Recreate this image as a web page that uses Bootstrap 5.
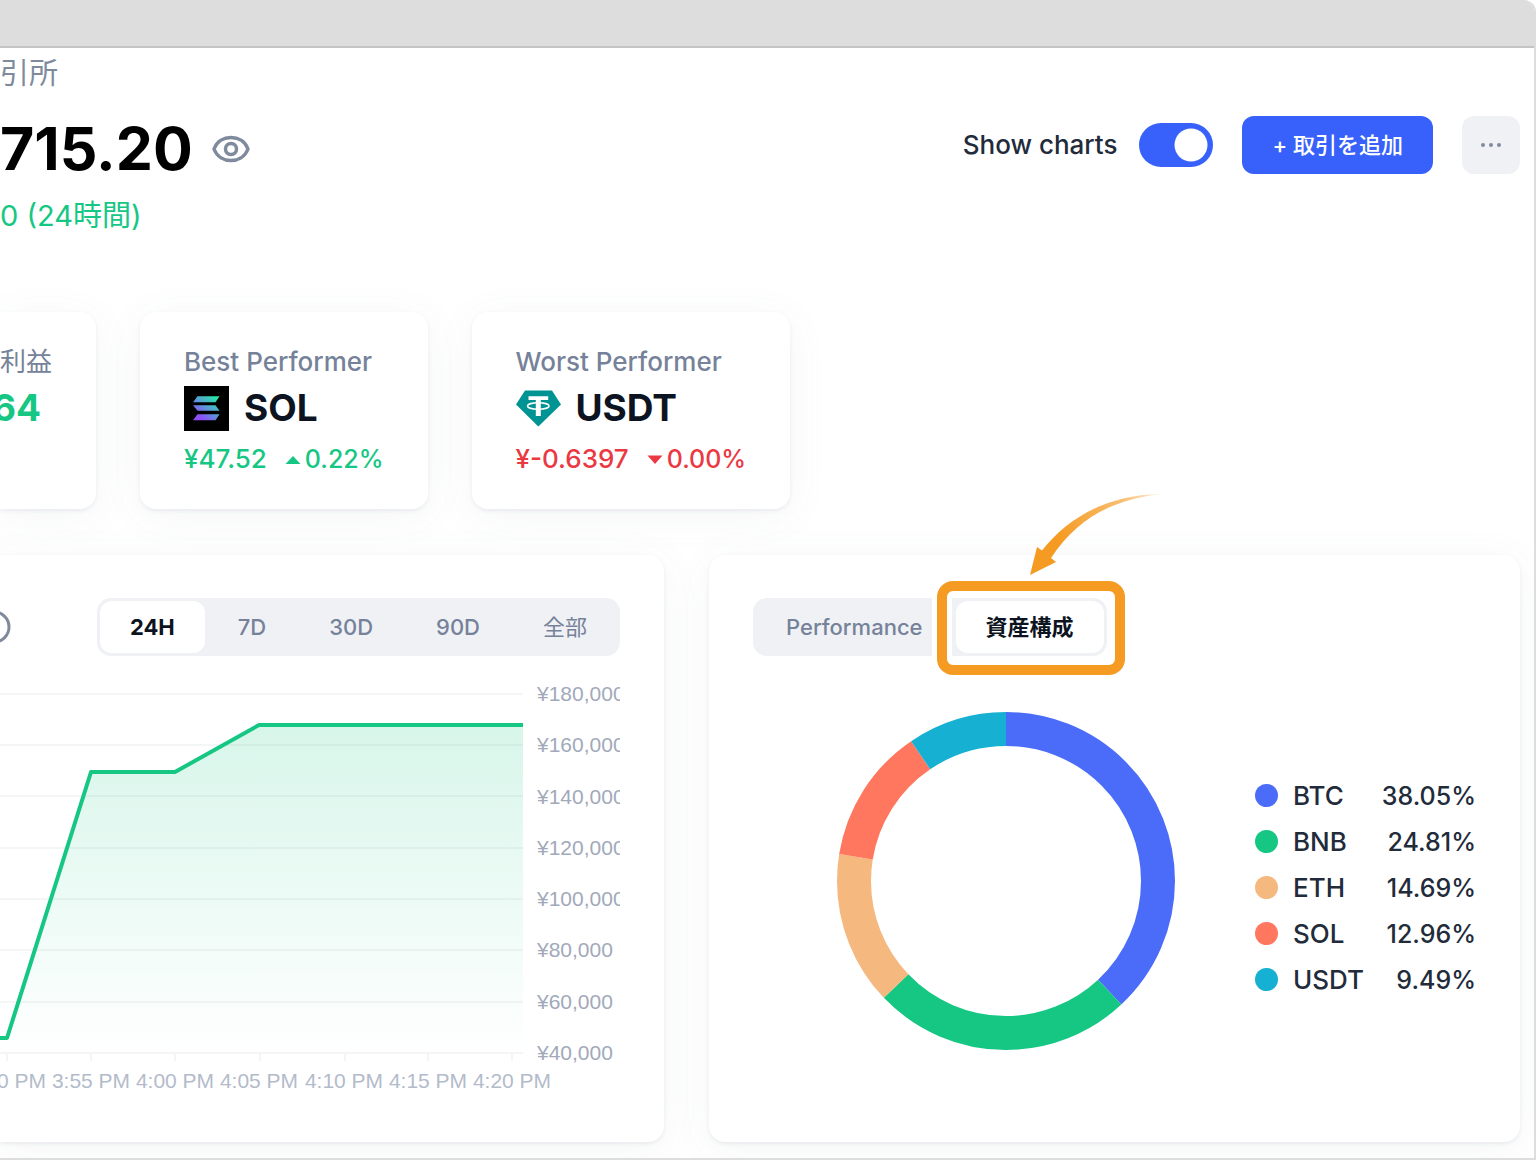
<!DOCTYPE html>
<html lang="ja">
<head>
<meta charset="utf-8">
<meta name="viewport" content="width=device-width, initial-scale=1">
<title>Portfolio</title>
<link rel="stylesheet" href="https://cdn.jsdelivr.net/npm/bootstrap@5.3.0/dist/css/bootstrap.min.css">
<style>
  :root {
    --ink: #0d1421;
    --muted: #768299;
    --up: #16c784;
    --down: #ea3943;
    --brand: #3861fb;
    --track: #eff1f5;
    --frame: #ddd;
    --mark: #f59b23;
  }
  body { font-family: Inter, "Noto Sans CJK JP", sans-serif; color: var(--ink); background: #fff; font-size: 26px; line-height: 36px; font-weight: 500; }
  .window { min-height: 100vh; border-right: 2px solid var(--frame); border-bottom: 2px solid var(--frame); border-top-right-radius: 12px; overflow: hidden; background: #fff; }
  .titlebar { height: 48px; background: #ddd; border-bottom: 2px solid #c4c4c4; margin-right: -2px; }
  .content { padding: 8px 14px 16px 0; }
  .crumb { color: #808a9d; font-size: 29px; font-weight: 400; }
  .summary { margin-top: 20px; }
  .total { font-size: 59px; line-height: 74px; font-weight: 700; color: #000; }
  .eye-btn { margin-left: 19px; line-height: 0; }
  .change { margin-top: 12px; font-size: 29px; font-weight: 400; color: var(--up); }
  .text-muted2 { color: var(--muted); }
  .text-up { color: var(--up); }
  .text-down { color: var(--down); }
  .actions { gap: 29px; padding-top: 4px; }
  .show-charts { gap: 22px; color: #222b3a; }
  .show-charts .form-check-input { width: 74px; height: 44px; border: 0; background-color: #cfd6e4; }
  .show-charts .form-check-input:checked { background-color: var(--brand); }
  .btn-add { background: var(--brand); color: #fff; font-size: 22px; line-height: 30px; font-weight: 500; padding: 14px 30px; border: 0; border-radius: 12px; }
  .btn-add:hover { background: #2a52e8; color: #fff; }
  .btn-more { width: 58px; height: 58px; padding: 0; border: 0; border-radius: 12px; background: var(--track); line-height: 0; }
  .panel { background: #fff; border-radius: 16px; box-shadow: 0 2px 4px rgba(88,102,126,.10), 0 7px 44px rgba(88,102,126,.06); }
  .panel-cut { border-top-left-radius: 0; border-bottom-left-radius: 0; }
  .stats { margin-top: 78px; gap: 44px; }
  .stat { padding: 32px 44px; }
  .stat-cut { padding-left: 0; }
  .stat-cut .stat-name { margin-left: -8px; }
  .stat-name { margin: 6px 0 11px; height: 44px; font-size: 37px; line-height: 44px; font-weight: 700; gap: 15px; }
  .stat-foot { gap: 18px; }
  .stat-foot svg { margin-right: 4px; }
  .pct { font-size: 25px; }
  .panels { margin-top: 46px; gap: 45px; }
  .history { flex: 0 0 calc(45% - 20px); min-width: 0; padding: 43px 44px 44px 0; }
  .alloc { flex: 1 1 0; min-width: 0; padding: 43px 44px 44px; }
  .tabs { background: var(--track); border-radius: 14px; padding: 3px; gap: 3px; }
  .tabs .btn { font-size: 22px; line-height: 30px; font-weight: 500; color: var(--muted); border: 0; border-radius: 12px; padding: 11px 30px; }
  .tabs .btn.active { background: #fff; color: var(--ink); font-weight: 700; }
  .callout { position: absolute; inset: -20px -21px -22px -19px; border: 10px solid var(--mark); border-radius: 16px; box-shadow: 0 0 0 5px #fff, inset 0 0 0 5px #fff; pointer-events: none; }
  .callout-arrow { position: absolute; left: 72px; top: -109px; pointer-events: none; }
  .callout-wrap .btn { position: relative; z-index: 1; }
  .chart { margin-top: 20px; display: block; width: 100%; height: auto; font-family: "Liberation Sans", Arial, sans-serif; font-size: 21px; font-weight: 400; }
  .alloc-body { margin-top: 56px; }
  .legend-list { width: 221px; padding-top: 13px; color: #222b3a; }
  .legend-list li { line-height: 46px; }
  .dot { width: 23px; height: 23px; border-radius: 50%; margin-right: 15px; }
</style>
</head>
<body>
<div class="window d-flex flex-column">
  <div class="titlebar"></div>
  <main class="content flex-fill d-flex flex-column">
    <div class="crumb">引所</div>
    <header class="summary d-flex justify-content-between align-items-start">
      <div>
        <div class="d-flex align-items-center">
          <h1 class="total m-0">715.20</h1>
          <button type="button" class="btn eye-btn p-0 border-0" aria-label="残高を隠す">
            <svg width="38" height="28" viewBox="0 0 38 28" fill="none" stroke="#808a9d" stroke-width="3.500"><path d="M2 14C5 6 12 2.500 19 2.500s14 3.500 17 11.500c-3 8-10 11.500-17 11.500S5 22 2 14z" stroke-linejoin="round"/><circle cx="19" cy="14" r="5.500" stroke-width="3.500"/></svg>
          </button>
        </div>
        <div class="change">0 (24時間)</div>
      </div>
      <div class="actions d-flex align-items-center">
        <div class="show-charts form-switch d-flex align-items-center p-0">
          <label for="showCharts">Show charts</label>
          <input class="form-check-input m-0" type="checkbox" role="switch" id="showCharts" checked>
        </div>
        <button type="button" class="btn btn-add">+ 取引を追加</button>
        <button type="button" class="btn btn-more" aria-label="その他">
          <svg width="22" height="6" viewBox="0 0 22 6" fill="#808a9d"><circle cx="3" cy="3" r="2"/><circle cx="11" cy="3" r="2"/><circle cx="19" cy="3" r="2"/></svg>
        </button>
      </div>
    </header>

    <section class="stats d-flex">
      <div class="panel panel-cut stat stat-cut">
        <div class="text-muted2 fw-normal">利益</div>
        <div class="stat-name text-up">64</div>
      </div>
      <div class="panel stat">
        <div class="text-muted2">Best Performer</div>
        <div class="stat-name d-flex align-items-center">
          <svg width="45" height="45" viewBox="0 0 45 45"><defs><linearGradient id="sol" gradientUnits="userSpaceOnUse" x1="34" y1="8" x2="12" y2="36"><stop offset="0" stop-color="#19fb9b"/><stop offset=".5" stop-color="#5a9ad8"/><stop offset=".8" stop-color="#8a52f4"/><stop offset="1" stop-color="#9945ff"/></linearGradient></defs><path d="M0 0h45v45H0z"/><path fill="url(#sol)" d="M13.500 10.300H35.500L31.500 16.300H9zM9 19.200H31.500L35.500 24.800H13.500zM13.500 28.200H35.500L31.500 34.200H9z"/></svg>
          <span>SOL</span>
        </div>
        <div class="stat-foot text-up d-flex"><span>¥47.52</span><span class="pct d-flex align-items-center"><svg width="16" height="10" viewBox="0 0 16 10" fill="currentColor"><path d="M8 2l7.500 8H.5z"/></svg>0.22%</span></div>
      </div>
      <div class="panel stat">
        <div class="text-muted2">Worst Performer</div>
        <div class="stat-name d-flex align-items-center">
          <svg width="45" height="37" viewBox="0 0 45 37"><path fill="#009393" d="M9 .5H36L45 14.500 22.300 36.500 0 14.500z"/><path fill="#fff" d="M12.500 6.300h19.700v3.700h-7.400v16h-5V10h-7.300z"/><ellipse cx="22.300" cy="16" rx="10.800" ry="3.200" fill="none" stroke="#fff" stroke-width="1.500"/></svg>
          <span>USDT</span>
        </div>
        <div class="stat-foot text-down d-flex"><span>¥-0.6397</span><span class="pct d-flex align-items-center"><svg width="16" height="10" viewBox="0 0 16 10" fill="currentColor"><path d="M.5 1.500h15L8 10z"/></svg>0.00%</span></div>
      </div>
    </section>

    <section class="panels d-flex flex-fill">
      <div class="panel panel-cut history">
        <div class="d-flex justify-content-between align-items-center">
          <svg width="11" height="36" viewBox="0 0 11 36" fill="none" stroke="#808a9d" stroke-width="3"><circle cx="-6" cy="18" r="15"/></svg>
          <div class="tabs d-flex" role="group" aria-label="期間">
            <button type="button" class="btn active">24H</button>
            <button type="button" class="btn">7D</button>
            <button type="button" class="btn">30D</button>
            <button type="button" class="btn">90D</button>
            <button type="button" class="btn fw-normal">全部</button>
          </div>
        </div>
        <svg class="chart" viewBox="0 676 620 422" role="img" aria-label="資産推移">
          <defs><linearGradient id="area" x1="0" y1="0" x2="0" y2="1"><stop offset="0" stop-color="#16c784" stop-opacity=".17"/><stop offset="1" stop-color="#16c784" stop-opacity="0"/></linearGradient></defs>
          <path fill="none" stroke="#f4f5f7" stroke-width="2" d="M0 694H523M0 745H523M0 796H523M0 848H523M0 899H523M0 950H523M0 1002H523M0 1053H523M7 1053V1061M91 1053V1061M175 1053V1061M260 1053V1061M345 1053V1061M428 1053V1061M512 1053V1061"/>
          <path fill="url(#area)" d="M0 1038H7L91 772H175L259 725H523V1053H0z"/>
          <path fill="none" stroke="#16c784" stroke-width="4" stroke-linejoin="round" d="M0 1038H7L91 772H175L259 725H523"/>
          <g fill="#a1a9ba">
            <text x="537" y="701">¥180,000</text><text x="537" y="752">¥160,000</text><text x="537" y="804">¥140,000</text><text x="537" y="855">¥120,000</text><text x="537" y="906">¥100,000</text><text x="537" y="957">¥80,000</text><text x="537" y="1009">¥60,000</text><text x="537" y="1060">¥40,000</text>
          </g>
          <g fill="#b3bbcb" text-anchor="middle">
            <text x="7" y="1088">3:50 PM</text><text x="91" y="1088">3:55 PM</text><text x="175" y="1088">4:00 PM</text><text x="259" y="1088">4:05 PM</text><text x="344" y="1088">4:10 PM</text><text x="428" y="1088">4:15 PM</text><text x="512" y="1088">4:20 PM</text>
          </g>
        </svg>
      </div>

      <div class="panel alloc">
        <div class="d-flex">
          <div class="tabs d-flex" role="group" aria-label="表示">
            <button type="button" class="btn">Performance</button>
            <div class="callout-wrap position-relative">
              <div class="callout"></div>
              <button type="button" class="btn active">資産構成</button>
              <svg class="callout-arrow" width="136" height="86" viewBox="1028 492 136 86"><defs><linearGradient id="fade" gradientUnits="userSpaceOnUse" x1="1162" y1="494" x2="1060" y2="540"><stop offset="0" stop-color="#f59b23" stop-opacity=".15"/><stop offset=".35" stop-color="#f59b23" stop-opacity=".65"/><stop offset="1" stop-color="#f59b23"/></linearGradient></defs><path fill="url(#fade)" d="M1030 575L1037 547L1042 550.500C1066 520 1104 495 1161 494C1110 500 1076 520 1051 558L1056 562z"/></svg>
            </div>
          </div>
        </div>
        <div class="alloc-body d-flex align-items-center">
          <div class="flex-fill d-flex justify-content-center ps-1">
            <svg width="338" height="338" viewBox="0 0 338 338" role="img" aria-label="資産構成">
              <g fill="none" stroke-width="34" transform="rotate(-90 169 169)">
                <circle cx="169" cy="169" r="152" stroke="#4a6cf9" pathLength="100" stroke-dasharray="38.050 61.950"/>
                <circle cx="169" cy="169" r="152" stroke="#16c784" pathLength="100" stroke-dasharray="24.810 75.190" stroke-dashoffset="-38.050"/>
                <circle cx="169" cy="169" r="152" stroke="#f5b87f" pathLength="100" stroke-dasharray="14.690 85.310" stroke-dashoffset="-62.860"/>
                <circle cx="169" cy="169" r="152" stroke="#ff775f" pathLength="100" stroke-dasharray="12.960 87.040" stroke-dashoffset="-77.550"/>
                <circle cx="169" cy="169" r="152" stroke="#16b1d2" pathLength="100" stroke-dasharray="9.490 90.510" stroke-dashoffset="-90.510"/>
              </g>
            </svg>
          </div>
          <ul class="legend-list list-unstyled m-0">
            <li class="d-flex align-items-center"><span class="dot" style="background:#4a6cf9"></span>BTC<span class="pct ms-auto">38.05%</span></li>
            <li class="d-flex align-items-center"><span class="dot" style="background:#16c784"></span>BNB<span class="pct ms-auto">24.81%</span></li>
            <li class="d-flex align-items-center"><span class="dot" style="background:#f5b87f"></span>ETH<span class="pct ms-auto">14.69%</span></li>
            <li class="d-flex align-items-center"><span class="dot" style="background:#ff775f"></span>SOL<span class="pct ms-auto">12.96%</span></li>
            <li class="d-flex align-items-center"><span class="dot" style="background:#16b1d2"></span>USDT<span class="pct ms-auto">9.49%</span></li>
          </ul>
        </div>
      </div>
    </section>
  </main>
</div>
<script src="https://cdn.jsdelivr.net/npm/bootstrap@5.3.0/dist/js/bootstrap.bundle.min.js"></script>
</body>
</html>
